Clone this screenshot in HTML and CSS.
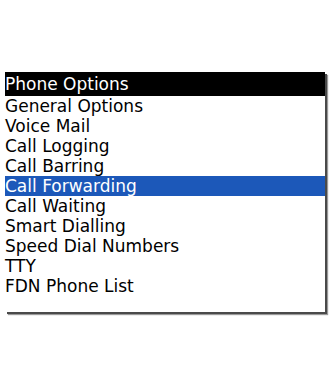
FILE: index.html
```html
<!DOCTYPE html>
<html>
<head>
<meta charset="utf-8">
<link rel="stylesheet" href="styles.css">
</head>
<body>
<div class="screen">
  <div class="title">Phone Options</div>
  <ul class="menu">
    <li>General Options</li>
    <li>Voice Mail</li>
    <li>Call Logging</li>
    <li>Call Barring</li>
    <li class="selected">Call Forwarding</li>
    <li>Call Waiting</li>
    <li>Smart Dialling</li>
    <li>Speed Dial Numbers</li>
    <li>TTY</li>
    <li>FDN Phone List</li>
  </ul>
</div>
</body>
</html>
```
FILE: styles.css
```css
html, body {
  margin: 0;
  padding: 0;
  background: #fff;
}
body {
  width: 330px;
  height: 385px;
  padding: 72px 0 0 5px;
  box-sizing: border-box;
  font-family: "DejaVu Sans", sans-serif;
  font-size: 17px;
}
.screen {
  width: 320px;
  height: 240px;
  background: #fff;
  box-shadow: 2px 2px 0 #4a4a4a, 3px 3px 1px #9a9a9a;
}
.title {
  height: 24px;
  line-height: 24px;
  background: #000;
  color: #fff;
  white-space: nowrap;
}
.menu {
  list-style: none;
  margin: 0;
  padding: 0;
}
.menu li {
  height: 20px;
  line-height: 20px;
  color: #000;
  white-space: nowrap;
}
.menu li.selected {
  background: #1c58b9;
  color: #fff;
}
```
